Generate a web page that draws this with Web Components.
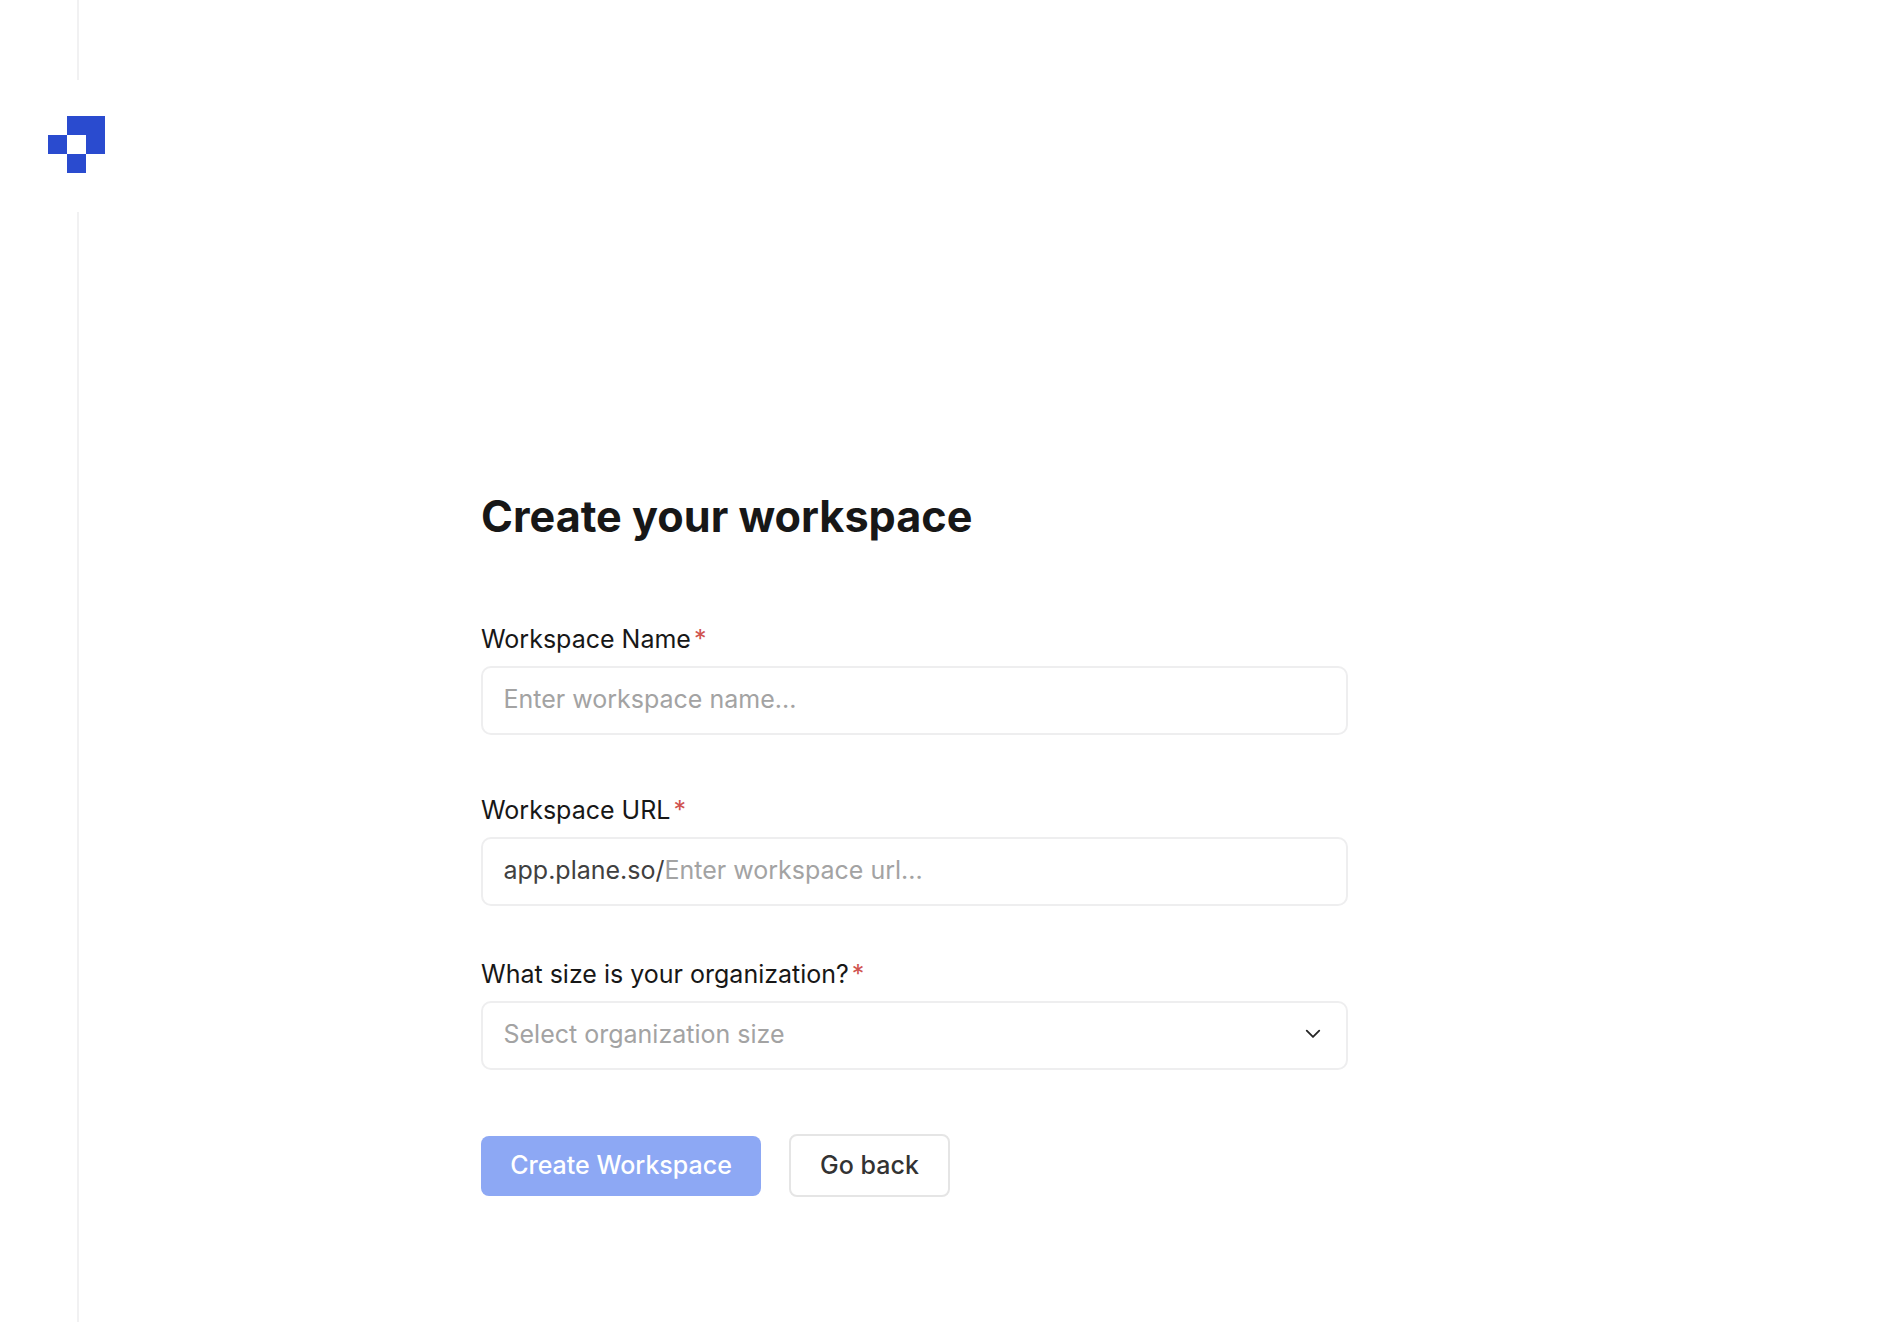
<!DOCTYPE html>
<html lang="en">
<head>
<meta charset="utf-8">
<title>Create your workspace</title>
<style>
  html, body { margin: 0; height: 100%; background: #fff; }
  body { font-family: Inter, "Liberation Sans", sans-serif; }
</style>
</head>
<body>
<workspace-page>
  <side-rail slot="rail"></side-rail>
  <h-title>Create your workspace</h-title>
  <form-field label="Workspace Name" placeholder="Enter workspace name..." style="margin-top:75px"></form-field>
  <form-field label="Workspace URL" prefix="app.plane.so/" placeholder="Enter workspace url..." style="margin-top:58px"></form-field>
  <form-field label="What size is your organization?" placeholder="Select organization size" chevron style="margin-top:51px"></form-field>
  <form-actions></form-actions>
</workspace-page>

<script>
class WorkspacePage extends HTMLElement {
  constructor() {
    super();
    const shadow = this.attachShadow({ mode: "open" });
    shadow.innerHTML = `
      <style>
        :host { display: flex; height: 1322px; overflow: hidden; }
        .main { width: 867px; margin-left: 324px; padding-top: 486px; display: flex; flex-direction: column; }
      </style>
      <slot name="rail"></slot>
      <div class="main"><slot></slot></div>
    `;
  }
}

class SideRail extends HTMLElement {
  constructor() {
    super();
    const shadow = this.attachShadow({ mode: "open" });
    shadow.innerHTML = `
      <style>
        :host { display: flex; flex-direction: column; width: 157px; height: 100%; flex: none; }
        .line { width: 2px; margin-left: 77px; background: #f1f1f2; }
        .top { height: 80px; }
        .bottom { flex: 1; }
        svg { display: block; width: 57px; height: 57px; margin: 36px 0 39px 48px; }
      </style>
      <div class="line top"></div>
      <svg viewBox="0 0 3 3" shape-rendering="crispEdges" aria-label="Plane">
        <path fill="#2a4bcf" d="M1 0H3V2H2V1H1ZM0 1H1V2H0ZM1 2H2V3H1Z"/>
      </svg>
      <div class="line bottom"></div>
    `;
  }
}

class HTitle extends HTMLElement {
  constructor() {
    super();
    const shadow = this.attachShadow({ mode: "open" });
    shadow.innerHTML = `
      <style>
        :host { display: block; font-size: 43.2px; line-height: 60px; margin-bottom: 1px; font-weight: 700; color: #171717; }
      </style>
      <slot></slot>
    `;
  }
}

class FormField extends HTMLElement {
  constructor() {
    super();
    const shadow = this.attachShadow({ mode: "open" });
    const prefix = this.getAttribute("prefix");
    const chevron = this.hasAttribute("chevron") ? `
      <svg viewBox="0 0 24 24" fill="none" stroke="#262626" stroke-width="2.2" stroke-linecap="round" stroke-linejoin="round">
        <path d="M4.5 8l7.5 7.5L19.5 8"/>
      </svg>` : "";
    shadow.innerHTML = `
      <style>
        :host { display: block; }
        .label { display: flex; gap: 3px; font-size: 25px; line-height: 36px; padding-bottom: 1px; margin-top: -1px; color: #171717; }
        .req { color: #d0534f; }
        .box {
          display: flex; align-items: center; justify-content: space-between;
          box-sizing: border-box; height: 69px; margin-top: 8px; padding: 0 24px 3px 20.5px;
          border: 2px solid #eeeeef; border-radius: 10px;
          font-size: 25px; color: #a3a3a3;
        }
        .prefix { color: #404040; }
        svg { width: 20px; height: 20px; flex: none; margin-right: -1px; }
      </style>
      <div class="label"><span>${this.getAttribute("label")}</span><span class="req">*</span></div>
      <div class="box">
        <div>${prefix ? `<span class="prefix">${prefix}</span>` : ""}<span>${this.getAttribute("placeholder")}</span></div>
        ${chevron}
      </div>
    `;
  }
}

class FormActions extends HTMLElement {
  constructor() {
    super();
    const shadow = this.attachShadow({ mode: "open" });
    shadow.innerHTML = `
      <style>
        :host { display: flex; align-items: center; gap: 28px; margin-top: 64px; font-size: 25px; }
        .btn { box-sizing: border-box; display: flex; align-items: center; justify-content: center; padding-bottom: 1px; border-radius: 8px; font-weight: 500; }
        .primary { width: 280px; height: 60px; background: #8da8f4; color: #fff; }
        .ghost { width: 161px; height: 63px; background: #fff; border: 2px solid #e5e5e5; color: #333; }
      </style>
      <div class="btn primary">Create Workspace</div>
      <div class="btn ghost">Go back</div>
    `;
  }
}

customElements.define("workspace-page", WorkspacePage);
customElements.define("side-rail", SideRail);
customElements.define("h-title", HTitle);
customElements.define("form-field", FormField);
customElements.define("form-actions", FormActions);
</script>
</body>
</html>
